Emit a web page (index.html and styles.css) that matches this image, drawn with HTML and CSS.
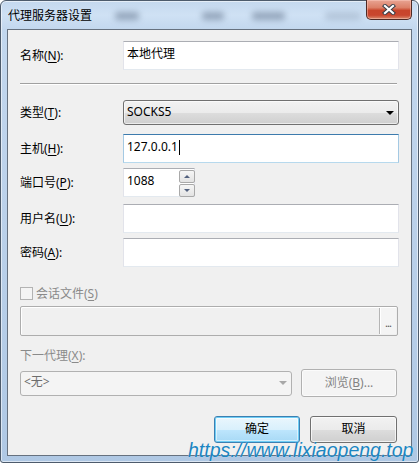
FILE: index.html
```html
<!DOCTYPE html>
<html lang="zh-CN">
<head>
<meta charset="utf-8">
<title>代理服务器设置</title>
<link rel="stylesheet" href="styles.css">
</head>
<body>
<div class="window">
  <div class="titlebar">
    <div class="glass g1"></div><div class="glass g2"></div><div class="glass g3"></div><div class="glass g4"></div>
    <span class="title">代理服务器设置</span>
    <div class="close">
      <svg width="14" height="11" viewBox="0 0 14 11"><path d="M3 2 L11 9 M11 2 L3 9" stroke="#3a3f48" stroke-width="4.2" stroke-linecap="square" fill="none"/><path d="M3 2 L11 9 M11 2 L3 9" stroke="#ffffff" stroke-width="2.2" stroke-linecap="square" fill="none"/></svg>
    </div>
  </div>
  <div class="client">
    <div class="row r-name"><span class="lbl">名称(<u>N</u>):</span><div class="tb">本地代理</div></div>
    <div class="sep"></div>
    <div class="row r-type"><span class="lbl">类型(<u>T</u>):</span><div class="combo"><span class="ctext">SOCKS5</span><span class="drop"></span></div></div>
    <div class="row r-host"><span class="lbl">主机(<u>H</u>):</span><div class="tb focus">127.0.0.1<span class="caret"></span></div></div>
    <div class="row r-port"><span class="lbl">端口号(<u>P</u>):</span><div class="tb port"><span class="ptext">1088</span><div class="spin"><span class="sbtn"><span class="up"></span></span><span class="sbtn"><span class="down"></span></span></div></div></div>
    <div class="row r-user"><span class="lbl">用户名(<u>U</u>):</span><div class="tb"></div></div>
    <div class="row r-pass"><span class="lbl">密码(<u>A</u>):</span><div class="tb"></div></div>
    <div class="row r-check"><span class="chk"></span><span class="dis">会话文件(<u>S</u>)</span></div>
    <div class="file"><span class="dots">...</span></div>
    <div class="next-lbl dis">下一代理(<u>X</u>):</div>
    <div class="row r-next"><div class="combo dcombo"><span class="ctext">&lt;无&gt;</span><span class="drop"></span></div><div class="btn dbtn">浏览(<u>B</u>)...</div></div>
    <div class="row r-btns"><div class="btn ok">确定</div><div class="btn cancel">取消</div></div>
  </div>
  <div class="watermark">https://www.lixiaopeng.top</div>
</div>
</body>
</html>
```
FILE: styles.css
```css
* { box-sizing: border-box; margin: 0; padding: 0; }
html, body { width: 419px; height: 463px; overflow: hidden; background: #ffffff; }
body { font-family: "Noto Sans", "Noto Sans CJK SC", sans-serif; font-size: 12px; color: #000; }
u { text-decoration: underline; text-underline-offset: 2px; }

.window {
  position: relative;
  width: 419px; height: 463px;
  display: flex; flex-direction: column;
  padding: 0 6px 6px 6px;
  border: 1px solid #4d5b6c;
  border-radius: 6px 6px 3px 3px;
  background: linear-gradient(to bottom, #c4d8ee 0px, #cfe1f4 14px, #c2d7ee 29px, #bfd4ec 120px, #b7cee8 300px, #afc8e4 100%);
  box-shadow: inset 0 0 0 1px rgba(255,255,255,0.55);
}

.titlebar {
  position: relative;
  height: 28px; flex: none;
  display: flex; align-items: flex-start; justify-content: space-between;
}
.glass { position: absolute; top: 11px; height: 8px; background: #7f91a8; filter: blur(3px); opacity: 0.75; border-radius: 3px; }
.g1 { left: 108px; width: 24px; }
.g2 { left: 195px; width: 22px; }
.g3 { left: 245px; width: 33px; }
.g4 { left: 318px; width: 36px; opacity: 0.35; }
.title {
  position: relative;
  margin: 6px 0 0 1px;
  line-height: 16px; font-size: 12px; color: #000;
  font-family: "Noto Sans CJK SC", sans-serif;
}
.close {
  position: relative;
  width: 46px; height: 20px; margin: -1px 0 0 0;
  border: 1px solid #4e2a25; border-top: none;
  border-radius: 0 0 5px 5px;
  background: linear-gradient(to bottom, #e8a493 0%, #dc8068 40%, #c8452b 55%, #c9462e 80%, #d98a6c 100%);
  box-shadow: inset 0 0 0 1px rgba(255,210,200,0.45);
  display: flex; align-items: center; justify-content: center;
}

.client {
  flex: 1;
  border: 1px solid #66717f;
  background: #f0f0f0;
  padding: 11px 12px 0 12px;
  display: flex; flex-direction: column;
}
.row { display: flex; align-items: center; }
.lbl { width: 103px; flex: none; line-height: 16px; }
.tb {
  flex: 1; height: 29px;
  border: 1px solid; border-color: #abadb3 #e2e3ea #e3e9ef #e2e3ea;
  background: #fff;
  padding: 0 3px 3px 3px;
  display: flex; align-items: center;
  line-height: 16px;
}
.tb.focus { border-color: #3d7bad #a4c9e3 #b7d9ed #a4c9e3; }
.caret { display: inline-block; width: 1px; height: 15px; background: #000; margin-left: 1px; }

.r-name { height: 29px; }
.sep { margin: 13px 2px 0 0; height: 2px; border-top: 1px solid #a0a0a0; border-bottom: 1px solid #ffffff; }
.r-type { height: 25px; margin-top: 15px; }
.r-host { height: 29px; margin-top: 9px; }
.r-port { height: 29px; margin-top: 5px; }
.r-user { height: 29px; margin-top: 7px; }
.r-pass { height: 29px; margin-top: 5px; }

.combo {
  flex: 1; height: 25px;
  border: 1px solid #707070; border-radius: 3px;
  background: linear-gradient(to bottom, #f2f2f2 0%, #ebebeb 50%, #dddddd 50%, #cfcfcf 100%);
  box-shadow: inset 0 0 0 1px rgba(255,255,255,0.6);
  display: flex; align-items: center;
  padding: 0 4px 2px 3px;
  line-height: 16px;
}
.ctext { flex: 1; }
.drop { width: 0; height: 0; border-left: 4px solid transparent; border-right: 4px solid transparent; border-top: 4px solid #000; margin-top: 2px; }

.tb.port { flex: none; width: 72px; padding: 0 0 0 3px; align-items: stretch; }
.ptext { flex: 1; display: flex; align-items: center; padding-bottom: 3px; }
.spin { width: 16px; display: flex; flex-direction: column; gap: 1px; padding: 1px 0 0 0; margin-right: -1px; margin-bottom: -1px; }
.sbtn {
  flex: 1;
  border: 1px solid #a9a9a9; border-radius: 2px;
  background: linear-gradient(to bottom, #f6f6f6, #e3e3e3);
  display: flex; align-items: center; justify-content: center;
}
.up { width: 0; height: 0; border-left: 3px solid transparent; border-right: 3px solid transparent; border-bottom: 3px solid #52617f; }
.down { width: 0; height: 0; border-left: 3px solid transparent; border-right: 3px solid transparent; border-top: 3px solid #52617f; }

.dis { color: #8a8a8a; }
.r-check { height: 13px; margin-top: 20px; line-height: 16px; }
.chk { width: 13px; height: 13px; border: 1px solid #b3b3b3; background: #f4f4f4; margin-right: 3px; flex: none; }

.file {
  margin: 6px 1px 0 0; height: 30px;
  border: 1px solid #adadad; border-radius: 2px;
  background: #f0f0f0;
  box-shadow: inset 1px 1px 0 #ffffff;
  display: flex; justify-content: flex-end;
  padding: 1px 1px 1px 0;
}
.dots {
  width: 17px;
  border-left: 1px solid #b5b5b5;
  background: #f4f4f4;
  box-shadow: inset 1px 0 0 #ffffff;
  color: #555; font-size: 11px; line-height: 12px;
  display: flex; align-items: flex-end; justify-content: center;
  padding-bottom: 5px; letter-spacing: -1px;
}

.next-lbl { margin-top: 12px; line-height: 16px; height: 16px; }
.r-next { height: 28px; margin-top: 5px; gap: 9px; margin-right: 2px; }
.dcombo {
  flex: none; width: 272px;
  border-color: #b1b1b1;
  background: #f4f4f4;
  box-shadow: none;
  color: #6d6d6d;
}
.dcombo .drop { border-top-color: #a8a8a8; margin-right: 0; }

.btn {
  height: 28px;
  border-radius: 3px;
  display: flex; align-items: center; justify-content: center;
  line-height: 16px; padding-bottom: 1px;
}
.dbtn { flex: 1; border: 1px solid #b1b1b1; background: #f4f4f4; color: #838383; box-shadow: inset 0 0 0 1px #fbfbfb; }

.r-btns { height: 27px; margin-top: 19px; justify-content: flex-end; gap: 10px; margin-right: 2px; }
.ok, .cancel { width: 86px; height: 27px; }
.ok {
  border: 1px solid #3c7fb1;
  background: linear-gradient(to bottom, #eaf6fd 0%, #d9f0fc 50%, #bee6fd 50%, #a7d9f5 100%);
  box-shadow: inset 0 0 0 1px #6ecdf5, inset 0 0 0 2px rgba(255,255,255,0.5);
}
.cancel {
  width: 87px;
  border: 1px solid #707070;
  background: linear-gradient(to bottom, #f2f2f2 0%, #ebebeb 50%, #dddddd 50%, #cfcfcf 100%);
  box-shadow: inset 0 0 0 1px rgba(255,255,255,0.7);
}

.watermark {
  position: absolute; left: 187px; top: 440px;
  font-family: "Liberation Sans", sans-serif; font-style: italic;
  font-size: 19.5px; line-height: 1; white-space: nowrap;
  color: #1b86c2;
  text-shadow: 0 0 1px rgba(255,255,255,0.6);
}
```
